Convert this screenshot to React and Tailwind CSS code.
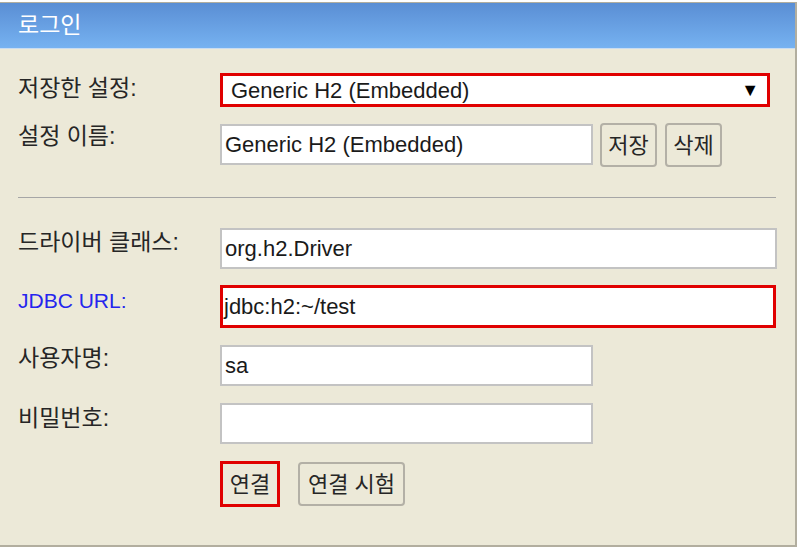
const FONT = "font-['Liberation_Sans','Noto_Sans_CJK_KR',sans-serif]"

function Label({ children, blue, className = '' }) {
  return (
    <div
      className={`w-[202px] shrink-0 leading-[26px] ${
        blue ? 'text-[21px] text-[#2525ee]' : 'text-[23px] text-[#262626]'
      } ${className}`}
    >
      {children}
    </div>
  )
}

function Field({ value, width, red, className = '' }) {
  return (
    <div
      className={`flex items-center bg-white text-[22px] text-[#1a1a1a] ${
        red ? 'border-[3px] border-[#e00000] pl-[1px]' : 'border-2 border-[#c3c3c3] pl-[3px]'
      } ${width} ${className}`}
    >
      {value}
    </div>
  )
}

function Button({ children, red, className = '' }) {
  return (
    <div
      className={`flex items-center justify-center bg-[#ece9d8] text-[22px] text-[#262626] ${
        red ? 'border-[3px] border-[#e00000]' : 'rounded-[4px] border-2 border-[#b3b0a6]'
      } ${className}`}
    >
      {children}
    </div>
  )
}

export default function App() {
  return (
    <div className={`min-h-screen bg-white pt-[2px] ${FONT}`}>
      <div className="flex h-[545px] w-[797px] flex-col border-t border-r-2 border-b-2 border-[#b2ae9f] bg-[#ece9d8]">
        <div className="flex h-[45px] items-center bg-gradient-to-b from-[#5a8ed4] to-[#76b2f1] pl-[18px] text-[23px] text-white">
          로그인
        </div>
        <div className="h-px bg-[#c9dcf0]" />

        <div className="pl-[18px]">
          <div className="mt-[24px] flex items-start">
            <Label className="pt-[2px]">저장한 설정:</Label>
            <div className="flex h-[34px] w-[550px] items-center justify-between border-[3px] border-[#e00000] bg-white pr-[8px] pl-[8px] text-[22px] text-[#1a1a1a]">
              <span>Generic H2 (Embedded)</span>
              <span className="text-[18px] text-black">▼</span>
            </div>
          </div>

          <div className="mt-[16px] flex items-start">
            <Label>설정 이름:</Label>
            <Field value="Generic H2 (Embedded)" width="w-[373px]" className="mt-[1px] h-[41px]" />
            <Button className="ml-[7px] h-[44px] w-[57px]">저장</Button>
            <Button className="ml-[8px] h-[44px] w-[57px]">삭제</Button>
          </div>

          <div className="mt-[30px] h-px w-[758px] bg-[#a6a6a6]" />

          <div className="mt-[30px] flex items-start">
            <Label className="pt-[1px]">드라이버 클래스:</Label>
            <Field value="org.h2.Driver" width="w-[557px]" className="h-[41px]" />
          </div>

          <div className="mt-[16px] flex items-start">
            <Label blue className="pt-[3px]">JDBC URL:</Label>
            <Field value="jdbc:h2:~/test" width="w-[556px]" red className="h-[43px]" />
          </div>

          <div className="mt-[17px] flex items-start">
            <Label>사용자명:</Label>
            <Field value="sa" width="w-[373px]" className="h-[41px]" />
          </div>

          <div className="mt-[17px] flex items-start">
            <Label className="pt-[2px]">비밀번호:</Label>
            <Field value="" width="w-[373px]" className="h-[41px]" />
          </div>

          <div className="mt-[17px] flex items-start">
            <div className="w-[202px] shrink-0" />
            <Button red className="h-[46px] w-[60px]">연결</Button>
            <Button className="mt-[1px] ml-[18px] h-[44px] w-[107px]">연결 시험</Button>
          </div>
        </div>
      </div>
    </div>
  )
}
